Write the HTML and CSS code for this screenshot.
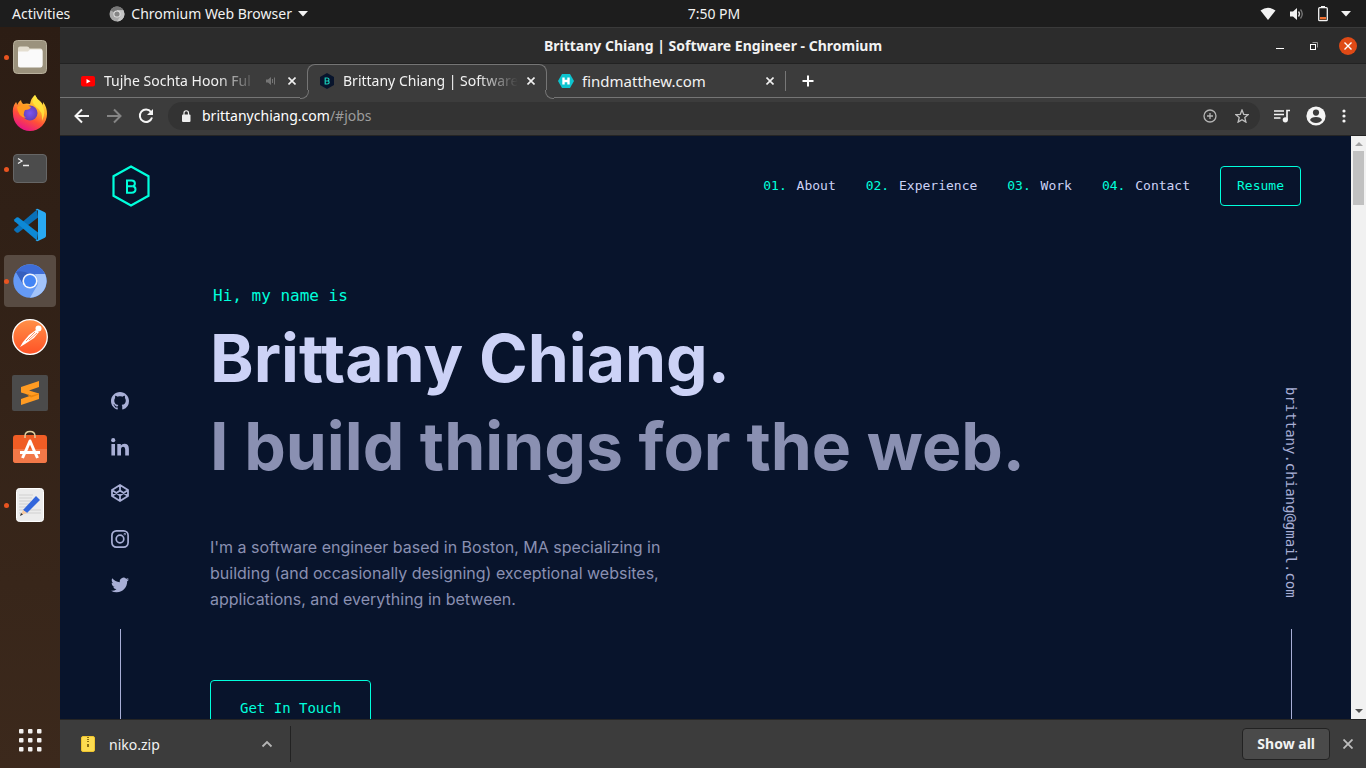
FILE: index.html
```html
<!DOCTYPE html>
<html lang="en">
<head>
<meta charset="utf-8">
<meta name="viewport" content="width=device-width, initial-scale=1">
<title>Brittany Chiang | Software Engineer</title>
<link rel="stylesheet" href="styles.css">
</head>
<body>
<header class="topbar">
  <div class="topbar-left">
    <button class="plain">Activities</button>
    <button class="plain app-menu">
      <svg width="16" height="16" viewBox="0 0 16 16"><circle cx="8" cy="8" r="7.5" fill="#a8a8a8"/><path d="M8 8L1.5 4.2A7.5 7.5 0 0 1 14.5 4.2H8z" fill="#777"/><path d="M8 8l3.5 2L8 15.5A7.5 7.5 0 0 0 15.5 8L14.500 4.200H8z" fill="#c5c5c5"/><circle cx="8" cy="8" r="3.6" fill="#e2e2e2"/><circle cx="8" cy="8" r="2.6" fill="#858585"/></svg>
      <span>Chromium Web Browser</span>
      <svg width="10" height="6" viewBox="0 0 10 6"><path d="M0 0h10L5 5.500z" fill="#f2f2f2"/></svg>
    </button>
  </div>
  <time class="clock">7:50 PM</time>
  <div class="tray">
    <svg width="16" height="14" viewBox="0 0 16 14"><path d="M.5 3.500Q8-2 15.500 3.500L8 13z" fill="#f2f2f2"/></svg>
    <svg width="16" height="14" viewBox="0 0 16 14"><path d="M1 4.500h3L8 1v12L4 9.500H1z" fill="#f2f2f2"/><path d="M9.500 4.500q2 2.500 0 5" fill="none" stroke="#ddd" stroke-width="1.300"/><path d="M11.500 2.500q3.500 4.500 0 9" fill="none" stroke="#777" stroke-width="1.300"/></svg>
    <svg width="10" height="16" viewBox="0 0 10 16"><rect x="3" y="0" width="4" height="2" fill="#f2f2f2"/><rect x=".7" y="1.700" width="8.600" height="13" rx="1" fill="none" stroke="#f2f2f2" stroke-width="1.300"/><rect x="2" y="11" width="6" height="2.400" fill="#f07030"/></svg>
    <svg width="10" height="6" viewBox="0 0 10 6"><path d="M0 0h10L5 5.500z" fill="#f2f2f2"/></svg>
  </div>
</header>

<div class="desktop">
<nav class="dock" aria-label="Dock">
  <button class="dock-item running" aria-label="Files"><svg width="34" height="34" viewBox="0 0 34 34"><rect x=".5" y=".5" width="33" height="33" rx="4" fill="#9b927d" stroke="#b8b09d"/><path d="M5 8.500q0-2 2-2h7q2 0 2.500 2h11q2 0 2 2V25q0 2-2 2H7q-2 0-2-2z" fill="#e4ded0"/><path d="M5 11.500h10l2-2h10.500q2 0 2 2V25q0 2.500-2 2.500H7q-2 0-2-2.500z" fill="#fafafa"/></svg></button>
  <button class="dock-item" aria-label="Firefox"><svg width="36" height="36" viewBox="0 0 36 36"><defs><linearGradient id="fx" x1=".8" y1="0" x2=".3" y2="1"><stop offset="0" stop-color="#fff44f"/><stop offset=".35" stop-color="#ffb02a"/><stop offset=".65" stop-color="#ff5038"/><stop offset="1" stop-color="#e6108c"/></linearGradient><radialGradient id="fp"><stop offset="0" stop-color="#7a55f4"/><stop offset="1" stop-color="#6540b8"/></radialGradient></defs><path d="M4 7q1 1 1 3Q7 6 9 5q0 2 2 4 4-1 7 0 1-6 5-9 2 4 5 6 2 2 3 4V7q4 5 4 12A17 17 0 0 1 1 19Q0 12 4 7z" fill="url(#fx)"/><circle cx="18" cy="18" r="7.500" fill="url(#fp)"/><path d="M5 12q7-5 14 0-1 3-6 3-3 5 1 8-8-1-9-11z" fill="#ff9a20"/><path d="M23 0q2 5 6 8 6 8 1 18 1-10-6-14-6-5-1-12z" fill="#ffe83e" opacity=".8"/></svg></button>
  <button class="dock-item running" aria-label="Terminal"><svg width="34" height="30" viewBox="0 0 34 30"><rect x=".5" y=".5" width="33" height="28" rx="3.500" fill="#4c4c4c" stroke="#666"/><path d="M5 4.500l4 2.500-4 2.500M10 11.500h6" fill="none" stroke="#eee" stroke-width="1.300"/></svg></button>
  <button class="dock-item" aria-label="Visual Studio Code"><svg width="34" height="34" viewBox="0 0 34 34"><path d="M24 1.500L1.500 20.800q-1 1 0 2L3.500 24.500q1 .7 2 0L25 9.500z" fill="#0a70b8"/><path d="M24 32.500L1.500 13.200q-1-1 0-2L3.500 9.500q1-.7 2 0L25 24.500z" fill="#0d89d6"/><path d="M25 1l6.800 3.200q1.200.6 1.200 2v21.600q0 1.400-1.200 2L25 33q-1.500.5-2.500-.8 2.500.5 2.500-1.700V3.500q0-2.200-2.500-1.700Q23.500.5 25 1z" fill="#29a9f3"/></svg></button>
  <button class="dock-item running selected" aria-label="Chromium"><svg width="34" height="34" viewBox="0 0 34 34"><circle cx="17" cy="17" r="16.700" fill="#659af5"/><path d="M3 8A16.700 16.700 0 0 1 32 10H17a8 8 0 0 0-7 10z" fill="#3e6dd7"/><path d="M32 10a16.700 16.700 0 0 1-15 23.700L24.500 21q1-5-2.500-11z" fill="#a2c3fa"/><path d="M10 20L3 8q6-2 14 2z" fill="#355fbe"/><circle cx="17" cy="17" r="7.600" fill="#f4f6fb"/><circle cx="17" cy="17" r="6" fill="#4385f5"/></svg></button>
  <button class="dock-item" aria-label="Postman"><svg width="36" height="36" viewBox="0 0 36 36"><defs><linearGradient id="pm" x2="0" y2="1"><stop offset="0" stop-color="#ff9048"/><stop offset="1" stop-color="#ff5226"/></linearGradient></defs><circle cx="18" cy="18" r="17.300" fill="url(#pm)" stroke="#fff" stroke-width="1.300"/><circle cx="26.500" cy="9.500" r="3" fill="#fff"/><path d="M24 11l-7 5-6 7-3 5 5-3 9-6 5-6z" fill="#fff"/><path d="M23 13l-9 9M25 14l-8 7" stroke="#ff7137" stroke-width=".8"/></svg></button>
  <button class="dock-item" aria-label="Sublime Text"><svg width="36" height="36" viewBox="0 0 36 36"><rect width="36" height="36" rx="2" fill="#4b4b4b"/><path d="M9 12l18-6v6l-10 3.500 10 3v5.500L9 30v-6l10-3.500-10-3z" fill="#ff9b22"/><path d="M14 19l5 1.500 8-2v1l-8 3z" fill="#ed850b"/></svg></button>
  <button class="dock-item" aria-label="Software"><svg width="34" height="38" viewBox="0 0 34 38"><rect y="5" width="34" height="28" rx="3" fill="#f05d25"/><path d="M0 19h34v11q0 3-3 3H3q-3 0-3-3z" fill="#f27848"/><path d="M12 8V6q0-4.500 5-4.500T22 6v2" fill="none" stroke="#e2d0a0" stroke-width="1.400"/><path d="M12.500 21.500L17 11l4.500 10.500M7 22.500h20M11.500 23.500l-2 4.500M22.500 23.500l2 4.500" fill="none" stroke="#fff" stroke-width="3" stroke-linejoin="round"/></svg></button>
  <button class="dock-item running" aria-label="Text Editor"><svg width="28" height="34" viewBox="0 0 28 34"><rect x=".5" y=".5" width="27" height="33" rx="3" fill="#ececec" stroke="#fff"/><path d="M3 7h14M3 10h13M3 13h12M3 16h10M3 19h9M3 22h22M3 25h22" stroke="#cacaca" stroke-width=".8"/><path d="M7 22L20 8l4 4-13 13z" fill="#3266dc"/><path d="M7 22l4 3-6 2z" fill="#f5c9a0"/><path d="M4 28l3-1.500-2-1.500z" fill="#333"/></svg></button>
  <button class="dock-item apps" aria-label="Show Applications"><svg width="24" height="24" viewBox="0 0 24 24" fill="#f4f2f0"><rect x="1" y="1" width="4.500" height="4.500" rx="1"/><rect x="10" y="1" width="4.500" height="4.500" rx="1"/><rect x="19" y="1" width="4.500" height="4.500" rx="1"/><rect x="1" y="10" width="4.500" height="4.500" rx="1"/><rect x="10" y="10" width="4.500" height="4.500" rx="1"/><rect x="19" y="10" width="4.500" height="4.500" rx="1"/><rect x="1" y="19" width="4.500" height="4.500" rx="1"/><rect x="10" y="19" width="4.500" height="4.500" rx="1"/><rect x="19" y="19" width="4.500" height="4.500" rx="1"/></svg></button>
</nav>

<div class="window">
  <div class="titlebar">
    <span class="window-title">Brittany Chiang | Software Engineer - Chromium</span>
    <div class="window-buttons">
      <button class="plain" aria-label="Minimize"><svg width="8" height="8" viewBox="0 0 8 8"><path d="M0 6.500h8" stroke="#fff"/></svg></button>
      <button class="plain" aria-label="Restore"><svg width="8" height="8" viewBox="0 0 8 8" fill="none"><path d="M2.500.5h5v5" stroke="#999"/><rect x=".5" y="2.500" width="5" height="5" stroke="#fff"/></svg></button>
      <button class="plain close-window" aria-label="Close"><svg width="8" height="8" viewBox="0 0 8 8"><path d="M.5.5l7 7M7.500.5l-7 7" stroke="#fff" stroke-width="1.400"/></svg></button>
    </div>
  </div>

  <div class="tabs">
    <div class="tab tab-first">
      <svg width="14" height="16" viewBox="0 0 14 16"><rect y="3" width="14" height="10.500" rx="2" fill="#f00"/><path d="M5.500 6l4 2.200-4 2.200z" fill="#fff"/></svg>
      <span class="tab-name faded">Tujhe Sochta Hoon Ful</span>
      <svg class="speaker" width="10" height="10" viewBox="0 0 10 10"><path d="M0 3.500h2L5 1v8L2 6.500H0z" fill="#757575"/><path d="M6.500 3v4M8.500 1.500v7" stroke="#757575"/></svg>
      <button class="plain tab-close" aria-label="Close tab"><svg width="8" height="8" viewBox="0 0 8 8"><path d="M.5.5l7 7M7.500.5l-7 7" stroke="#f0f0f0" stroke-width="1.600"/></svg></button>
    </div>
    <div class="tab tab-active">
      <svg width="14" height="16" viewBox="0 0 14 16"><path d="M7 0l7 4v8l-7 4-7-4V4z" fill="#08142c"/><path d="M5.200 5v6h2q2 0 2-1.700Q9.200 8 7.700 8 9 7.800 9 6.500 9 5 7.200 5zM5.200 8h2.500" fill="none" stroke="#18cdb8" stroke-width="1.200"/></svg>
      <span class="tab-name faded">Brittany Chiang | Software</span>
      <button class="plain tab-close" aria-label="Close tab"><svg width="8" height="8" viewBox="0 0 8 8"><path d="M.5.5l7 7M7.500.5l-7 7" stroke="#f0f0f0" stroke-width="1.600"/></svg></button>
    </div>
    <div class="tab-rest">
      <div class="tab tab-third">
        <svg width="16" height="16" viewBox="0 0 16 16"><path d="M4 1h8l4 7-4 7H4L0 8z" fill="#0dc4cf"/><path d="M5.500 11.500v-7M10.500 11.500v-7M5.500 8h5" fill="none" stroke="#fff" stroke-width="2.400"/></svg>
        <span class="tab-name">findmatthew.com</span>
        <button class="plain tab-close" aria-label="Close tab"><svg width="8" height="8" viewBox="0 0 8 8"><path d="M.5.5l7 7M7.500.5l-7 7" stroke="#f0f0f0" stroke-width="1.600"/></svg></button>
      </div>
      <button class="plain new-tab" aria-label="New tab"><svg width="12" height="12" viewBox="0 0 12 12"><path d="M6 .5v11M.5 6h11" stroke="#fff" stroke-width="2"/></svg></button>
    </div>
  </div>

  <div class="toolbar">
    <button class="plain" aria-label="Back"><svg width="16" height="16" viewBox="0 0 16 16" fill="none" stroke="#f5f5f5" stroke-width="2"><path d="M15 8H2M8 1.500L1.500 8 8 14.500"/></svg></button>
    <button class="plain" aria-label="Forward"><svg width="16" height="16" viewBox="0 0 16 16" fill="none" stroke="#858585" stroke-width="2"><path d="M1 8h13M8 1.500L14.500 8 8 14.500"/></svg></button>
    <button class="plain" aria-label="Reload"><svg width="16" height="16" viewBox="0 0 16 16"><path d="M13 4A6.200 6.200 0 1 0 14 9.500" fill="none" stroke="#f5f5f5" stroke-width="2"/><path d="M15 1v6H9z" fill="#f5f5f5"/></svg></button>
    <div class="address">
      <svg width="10" height="12" viewBox="0 0 10 12"><rect x="1" y="4.500" width="8.500" height="7.500" rx="1" fill="#eee"/><path d="M3 5V3a2.200 2.200 0 0 1 4.500 0v2" fill="none" stroke="#eee" stroke-width="1.200"/></svg>
      <a class="url" href="#jobs">brittanychiang.com<span>/#jobs</span></a>
      <button class="plain" aria-label="Zoom"><svg width="14" height="14" viewBox="0 0 14 14" fill="none" stroke="#b5b5b5" stroke-width="1.300"><circle cx="7" cy="7" r="6"/><path d="M7 4v6M4 7h6"/></svg></button>
      <button class="plain" aria-label="Bookmark"><svg width="14" height="14" viewBox="0 0 14 14"><path d="M7 1l1.700 4.300 4.600.3-3.500 3 1.100 4.500L7 10.700l-3.900 2.400 1.100-4.500-3.500-3 4.600-.3z" fill="none" stroke="#c0c0c0" stroke-width="1.300"/></svg></button>
    </div>
    <button class="plain" aria-label="Media"><svg width="16" height="14" viewBox="0 0 16 14"><path d="M0 2h10M0 5.500h10M0 9h6.500M13 11V1.500h3" fill="none" stroke="#f5f5f5" stroke-width="1.700"/><circle cx="11.300" cy="10.800" r="2.600" fill="#f5f5f5"/></svg></button>
    <button class="plain" aria-label="Profile"><svg width="20" height="20" viewBox="0 0 20 20"><circle cx="10" cy="10" r="9.600" fill="#f5f5f5"/><circle cx="10" cy="6.600" r="3.100" fill="#3c3c3c"/><path d="M4 14q1-3 6-3t6 3q-2 3-6 3t-6-3z" fill="#3c3c3c"/></svg></button>
    <button class="plain" aria-label="Menu"><svg width="4" height="14" viewBox="0 0 4 14" fill="#f5f5f5"><circle cx="2" cy="2" r="1.600"/><circle cx="2" cy="7" r="1.600"/><circle cx="2" cy="12" r="1.600"/></svg></button>
  </div>

  <div class="viewport">
    <div class="page">
      <header class="site-header">
        <a class="logo" href="#" aria-label="Home"><svg width="38" height="42" viewBox="0 0 38 42" fill="none" stroke="#00ffdc" stroke-width="2.200"><path d="M19 1.500l17.500 9.700v19.600L19 40.500 1.500 30.800V11.200z"/><path d="M15 15.500v12.200h4.500q4 0 4-3.400 0-3-3.300-3.100 2.700-.2 2.700-2.800 0-2.900-3.400-2.900zM15 21.200h5" stroke-width="2"/></svg></a>
        <nav class="site-nav">
          <a href="#about"><span>01.</span> About</a>
          <a href="#jobs"><span>02.</span> Experience</a>
          <a href="#work"><span>03.</span> Work</a>
          <a href="#contact"><span>04.</span> Contact</a>
          <a class="resume" href="#resume">Resume</a>
        </nav>
      </header>
      <div class="body-grid">
        <aside class="side">
          <a href="#github" aria-label="GitHub"><svg width="18" height="18" viewBox="0 0 16 16"><path fill="#a8afd6" d="M8 0C3.580 0 0 3.580 0 8c0 3.540 2.290 6.530 5.470 7.590.4.070.55-.17.55-.38 0-.19-.01-.82-.01-1.490-2.010.37-2.530-.49-2.690-.94-.09-.23-.48-.94-.82-1.130-.28-.15-.68-.52-.01-.53.63-.01 1.080.58 1.230.82.720 1.210 1.870.87 2.330.66.070-.52.280-.87.510-1.070-1.780-.2-3.640-.89-3.640-3.950 0-.87.310-1.590.82-2.150-.08-.2-.36-1.020.08-2.120 0 0 .67-.21 2.200.82.640-.18 1.320-.27 2-.27s1.360.09 2 .27c1.530-1.040 2.200-.82 2.200-.82.440 1.100.160 1.920.080 2.120.510.560.820 1.270.820 2.150 0 3.070-1.870 3.750-3.650 3.950.290.250.540.730.540 1.480 0 1.070-.01 1.930-.01 2.200 0 .210.150.460.550.380A8 8 0 0 0 16 8c0-4.420-3.580-8-8-8z"/></svg></a>
          <a href="#linkedin" aria-label="LinkedIn"><svg width="18" height="18" viewBox="0 0 18 18" fill="#a8afd6"><circle cx="2.200" cy="2.200" r="2.100"/><path d="M.4 6H4v11.500H.4zM6.300 6h3.500v1.600Q11 5.700 13.400 5.700q4.500 0 4.500 5.200v6.600h-3.700v-6q0-2.700-2-2.700-2.200 0-2.200 2.800v5.900H6.300z"/></svg></a>
          <a href="#codepen" aria-label="CodePen"><svg width="18" height="18" viewBox="0 0 18 18" fill="none" stroke="#a8afd6" stroke-width="1.800" stroke-linejoin="round"><path d="M9 1l8 5v6l-8 5-8-5V6zM9 1v5.500M9 11.500V17M1 6l8 5.500L17 6M1 12l8-5.500 8 5.500"/></svg></a>
          <a href="#instagram" aria-label="Instagram"><svg width="18" height="18" viewBox="0 0 18 18" fill="none" stroke="#a8afd6" stroke-width="1.700"><rect x=".9" y=".9" width="16.200" height="16.200" rx="4.500"/><circle cx="9" cy="9" r="3.800"/><circle cx="13.800" cy="4.200" r=".3"/></svg></a>
          <a href="#twitter" aria-label="Twitter"><svg width="18" height="18" viewBox="0 0 24 24"><path fill="#a8afd6" d="M23.950 4.570a10 10 0 0 1-2.820.78 4.960 4.960 0 0 0 2.160-2.730c-.95.560-2 .960-3.130 1.190a4.920 4.920 0 0 0-8.380 4.480C7.690 8.100 4.070 6.130 1.640 3.160a4.820 4.820 0 0 0-.67 2.480c0 1.710.87 3.210 2.190 4.100a4.900 4.900 0 0 1-2.230-.62v.06a4.920 4.920 0 0 0 3.950 4.830 5 5 0 0 1-2.210.08 4.940 4.940 0 0 0 4.600 3.420A9.870 9.870 0 0 1 0 19.540a14 14 0 0 0 7.550 2.210c9.050 0 14-7.500 14-13.980 0-.210 0-.420-.02-.630a9.940 9.940 0 0 0 2.460-2.550z"/></svg></a>
          <div class="side-line"></div>
        </aside>
        <main class="hero">
          <p class="greeting">Hi, my name is</p>
          <h1>Brittany Chiang.</h1>
          <h2>I build things for the web.</h2>
          <p class="intro">I'm a software engineer based in Boston, MA specializing in building (and occasionally designing) exceptional websites, applications, and everything in between.</p>
          <a class="cta" href="#contact">Get In Touch</a>
        </main>
        <aside class="side">
          <a class="email" href="#email">brittany.chiang@gmail.com</a>
          <div class="side-line"></div>
        </aside>
      </div>
    </div>
    <div class="scrollbar" aria-hidden="true">
      <svg width="8" height="4" viewBox="0 0 8 4"><path d="M0 4l4-4 4 4z" fill="#a3a3a3"/></svg>
      <div class="thumb"></div>
      <svg class="down" width="8" height="4" viewBox="0 0 8 4"><path d="M0 0h8L4 4z" fill="#505050"/></svg>
    </div>
  </div>

  <footer class="downloads">
    <button class="plain download">
      <svg width="14" height="16" viewBox="0 0 14 16"><rect x=".5" y=".5" width="13" height="15" rx="1.500" fill="#fddc50" stroke="#f0c52e"/><path d="M7 1v6" stroke="#8a6d10" stroke-width="2" stroke-dasharray="1 1"/><rect x="6" y="8" width="2" height="3" fill="#8a6d10"/></svg>
      <span>niko.zip</span>
      <svg width="12" height="8" viewBox="0 0 12 8"><path d="M1.500 6.500L6 2l4.500 4.500" fill="none" stroke="#b5b5b5" stroke-width="1.800"/></svg>
    </button>
    <button class="show-all">Show all</button>
    <button class="plain" aria-label="Close downloads"><svg width="10" height="10" viewBox="0 0 10 10"><path d="M.5.5l9 9M9.500.5l-9 9" stroke="#bdbdbd" stroke-width="1.800"/></svg></button>
  </footer>
</div>
</div>
</body>
</html>
```
FILE: styles.css
```css
* { box-sizing: border-box; }

body {
  margin: 0;
  height: 100vh;
  display: flex;
  flex-direction: column;
  overflow: hidden;
  background: #1d1d1d;
  color: #f2f2f2;
  font: 14px/20px "Noto Sans", sans-serif;
}

svg { display: block; flex: none; }
a { color: inherit; text-decoration: none; }

button { font: inherit; color: inherit; cursor: pointer; }
.plain { border: 0; padding: 0; background: none; }

/* System bar */
.topbar {
  flex: none;
  display: grid;
  grid-template-columns: 62px 1fr auto 1fr;
  align-items: center;
  height: 27px;
}
.topbar-left { grid-column: 1 / 3; display: flex; gap: 39px; padding-left: 12px; }
.app-menu { display: flex; align-items: center; gap: 6px; }
.tray { display: flex; align-items: center; justify-content: flex-end; gap: 13px; padding-right: 15px; }

.desktop { flex: 1; min-height: 0; display: flex; }

/* Dock */
.dock {
  flex: none;
  width: 60px;
  display: flex;
  flex-direction: column;
  align-items: center;
  gap: 4px;
  padding: 4px 0 2px;
  background: linear-gradient(#2c1d14, #3c291c);
}
.dock-item {
  position: relative;
  flex: none;
  display: grid;
  place-items: center;
  width: 52px;
  height: 52px;
  padding: 0;
  border: 0;
  border-radius: 4px;
  background: none;
}
.selected { background: #584b42; }
.running::before {
  content: "";
  position: absolute;
  left: 0;
  top: 24px;
  width: 5px;
  height: 5px;
  border-radius: 50%;
  background: #e95420;
}
.apps { margin-top: auto; }

/* Browser window */
.window {
  flex: 1;
  min-width: 0;
  display: flex;
  flex-direction: column;
  background: #3c3c3c;
  border-top: 1px solid #3a3a3a;
}
.titlebar {
  flex: none;
  display: grid;
  grid-template-columns: 1fr auto 1fr;
  align-items: center;
  height: 36px;
  background: #2c2c2c;
  border-bottom: 1px solid #222;
}
.window-title { grid-column: 2; font-weight: 700; }
.window-buttons { display: flex; align-items: center; justify-content: flex-end; gap: 26px; padding-right: 9px; }
.close-window {
  display: grid;
  place-items: center;
  width: 18px;
  height: 18px;
  margin-left: -5px;
  border-radius: 50%;
  background: #df4a16;
}

.tabs { flex: none; display: flex; height: 34px; }
.tab { display: flex; align-items: center; gap: 8px; height: 34px; }
.tab-first { width: 240px; padding: 0 4px 0 21px; gap: 9px; border-bottom: 1px solid #757575; }
.tab-active {
  position: relative;
  width: 240px;
  height: 26px;
  margin: 0 7px;
  padding: 6px 11px 0 12px;
  gap: 9px;
  border: 1px solid #757575;
  border-bottom: 0;
  border-radius: 8px 8px 0 0;
}
.tab-active::before,
.tab-active::after {
  content: "";
  position: absolute;
  top: 25px;
  width: 8px;
  height: 8px;
  border-bottom: 1px solid #757575;
}
.tab-active::before { left: -8px; border-right: 1px solid #757575; border-bottom-right-radius: 8px; }
.tab-active::after { right: -8px; border-left: 1px solid #757575; border-bottom-left-radius: 8px; }
.tab-rest { flex: 1; display: flex; align-items: center; border-bottom: 1px solid #757575; }
.tab-third { width: 232px; height: 20px; padding: 0 11px 0 4px; border-right: 1px solid #777; font-size: 15px; }
.tab-name { flex: 1; min-width: 0; white-space: nowrap; }
.faded {
  -webkit-mask-image: linear-gradient(90deg, #000 calc(100% - 40px), transparent);
  mask-image: linear-gradient(90deg, #000 calc(100% - 40px), transparent);
}
.speaker { margin-right: 3px; }
.new-tab { padding: 0 16px; }

.toolbar {
  flex: none;
  display: flex;
  align-items: center;
  gap: 16px;
  height: 38px;
  padding: 0 20px 2px 14px;
  border-bottom: 1px solid #252525;
}
.address {
  flex: 1;
  display: flex;
  align-items: center;
  gap: 18px;
  height: 28px;
  margin-left: -2px;
  margin-right: -2px;
  padding: 0 11px 0 13px;
  border-radius: 14px;
  background: #333;
}
.url { flex: 1; margin-left: -7px; color: #fff; }
.url span { color: #9c9c9c; }

/* Web page */
.viewport { flex: 1; min-height: 0; display: flex; overflow: hidden; }
.page {
  flex: 1;
  min-width: 0;
  display: flex;
  flex-direction: column;
  overflow: hidden;
  background: #08142c;
  font-family: "DejaVu Sans Mono", monospace;
  color: #ccd2f6;
}
.site-header {
  flex: none;
  display: flex;
  align-items: center;
  justify-content: space-between;
  height: 100px;
  padding: 0 50px 0 52px;
}
.site-nav { display: flex; align-items: center; gap: 30px; font-size: 13px; }
.site-nav span { margin-right: 2px; color: #00ffdc; }
.resume {
  padding: 9px 16px;
  border: 1px solid #00ffdc;
  border-radius: 4px;
  color: #00ffdc;
}
.body-grid {
  flex: 1;
  min-height: 0;
  display: grid;
  grid-template-columns: 40px 1fr 40px;
  grid-template-rows: 100%;
  gap: 70px;
  padding: 0 40px;
}
.side { display: flex; flex-direction: column; align-items: center; justify-content: flex-end; gap: 28px; color: #a8afd6; }
.side-line { width: 1px; height: 90px; margin-top: 7px; background: #a8afd6; }
.email { writing-mode: vertical-rl; margin-bottom: -4px; font-size: 14px; }

.hero { padding-top: 50px; }
.hero p, .hero h1, .hero h2 { margin: 0; }
.hero .greeting { padding-left: 3px; color: #00ffdc; font-size: 16px; }
.hero h1, .hero h2 { font: 700 66px/88px Inter, sans-serif; }
.hero h1 { margin-top: 8px; }
.hero h2 { color: #8a90b2; }
.hero .intro {
  max-width: 480px;
  margin: 44px 0 68px;
  color: #8a90b2;
  font: 16px/26px Inter, sans-serif;
}
.cta {
  display: inline-block;
  padding: 17px 29px;
  border: 1px solid #00ffdc;
  border-radius: 4px;
  color: #00ffdc;
  font-size: 14px;
}

.scrollbar {
  flex: none;
  display: flex;
  flex-direction: column;
  align-items: center;
  gap: 5px;
  width: 15px;
  padding: 6px 0;
  background: #f1f1f1;
}
.thumb { width: 11px; height: 54px; background: #c1c1c1; }
.down { margin-top: auto; }

/* Downloads shelf */
.downloads {
  flex: none;
  display: flex;
  align-items: center;
  gap: 13px;
  height: 49px;
  padding: 0 13px 0 0;
  border-top: 1px solid #252525;
}
.download {
  display: flex;
  align-items: center;
  gap: 14px;
  width: 231px;
  height: 36px;
  margin-right: auto;
  padding: 0 17px 0 21px;
  border-right: 1px solid #222;
}
.download span { flex: 1; padding-top: 2px; text-align: left; }
.show-all {
  height: 32px;
  padding: 0 14px;
  border: 1px solid #222;
  border-radius: 4px;
  background: #4a4a4a;
  font-weight: 700;
}
```
